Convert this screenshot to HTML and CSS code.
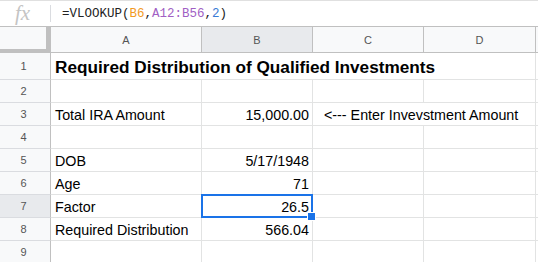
FILE: index.html
```html
<!DOCTYPE html>
<html lang="en">

<head>
    <meta charset="UTF-8">
    <meta name="viewport" content="width=device-width, initial-scale=1.0">
    <title>Required Distribution</title>
    <link rel="stylesheet" href="styles.css">
</head>

<body>
    <div class="formula-bar">
        <span class="fx">fx</span>
        <span class="fx-divider"></span>
        <span class="formula">=VLOOKUP(<span class="ref-a">B6</span>,<span class="ref-b">A12:B56</span>,<span class="ref-num">2</span>)</span>
    </div>

    <div class="sheet">
        <!-- column headers -->
        <div class="corner"></div>
        <div class="col-head">A</div>
        <div class="col-head selected">B</div>
        <div class="col-head">C</div>
        <div class="col-head">D</div>
        <div class="col-head"></div>

        <!-- row 1 -->
        <div class="row-head">1</div>
        <div class="cell title span-4">Required Distribution of Qualified Investments</div>
        <div class="cell"></div>

        <!-- row 2 -->
        <div class="row-head">2</div>
        <div class="cell"></div>
        <div class="cell"></div>
        <div class="cell"></div>
        <div class="cell"></div>
        <div class="cell"></div>

        <!-- row 3 -->
        <div class="row-head">3</div>
        <div class="cell">Total IRA Amount</div>
        <div class="cell num">15,000.00</div>
        <div class="cell note span-2">&lt;--- Enter Invevstment Amount</div>
        <div class="cell"></div>

        <!-- row 4 -->
        <div class="row-head">4</div>
        <div class="cell"></div>
        <div class="cell"></div>
        <div class="cell"></div>
        <div class="cell"></div>
        <div class="cell"></div>

        <!-- row 5 -->
        <div class="row-head">5</div>
        <div class="cell">DOB</div>
        <div class="cell num">5/17/1948</div>
        <div class="cell"></div>
        <div class="cell"></div>
        <div class="cell"></div>

        <!-- row 6 -->
        <div class="row-head">6</div>
        <div class="cell">Age</div>
        <div class="cell num">71</div>
        <div class="cell"></div>
        <div class="cell"></div>
        <div class="cell"></div>

        <!-- row 7 -->
        <div class="row-head selected">7</div>
        <div class="cell">Factor</div>
        <div class="cell num active">26.5</div>
        <div class="cell"></div>
        <div class="cell"></div>
        <div class="cell"></div>

        <!-- row 8 -->
        <div class="row-head">8</div>
        <div class="cell">Required Distribution</div>
        <div class="cell num">566.04</div>
        <div class="cell"></div>
        <div class="cell"></div>
        <div class="cell"></div>

        <!-- row 9 -->
        <div class="row-head">9</div>
        <div class="cell"></div>
        <div class="cell"></div>
        <div class="cell"></div>
        <div class="cell"></div>
        <div class="cell"></div>
    </div>
</body>

</html>
```

FILE: styles.css
```css
:root {
    --header-bg: #f8f9fa;
    --header-selected: #e8eaed;
    --header-line: #c0c0c0;
    --grid-line: #e2e3e3;
    --header-text: #555555;
    --accent: #1a73e8;
}

* {
    box-sizing: border-box;
    margin: 0;
    padding: 0;
}

html,
body {
    height: 100%;
}

body {
    display: flex;
    flex-direction: column;
    font-family: 'Liberation Sans', Arial, sans-serif;
    background-color: #ffffff;
    color: #000000;
    overflow: hidden;
}

/* Formula bar */
.formula-bar {
    display: flex;
    align-items: center;
    flex-shrink: 0;
    height: 27px;
    border-top: 1px solid #e0e0e0;
    border-bottom: 1px solid var(--header-line);
}

.fx {
    width: 50px;
    padding-left: 15px;
    font-family: 'Liberation Serif', serif;
    font-style: italic;
    font-size: 21px;
    color: #c4c4c4;
    line-height: 25px;
}

.fx-divider {
    width: 1px;
    height: 17px;
    background-color: #dadce0;
}

.formula {
    padding-left: 11px;
    font-family: 'Liberation Mono', monospace;
    font-size: 12.5px;
    color: #222222;
    white-space: nowrap;
}

.ref-a {
    color: #f29a1f;
}

.ref-b {
    color: #a15fc4;
}

.ref-num {
    color: #3a7bd5;
}

/* Grid */
.sheet {
    flex: 1;
    min-height: 0;
    overflow: hidden;
    display: grid;
    grid-template-columns: 51px 151px 111px 111px 112px 1fr;
    grid-template-rows: 26px 27px repeat(8, 23px);
}

.corner {
    background-color: var(--header-bg);
    border-right: 5px solid var(--header-line);
    border-bottom: 4px solid var(--header-line);
}

.col-head {
    display: flex;
    align-items: center;
    justify-content: center;
    background-color: var(--header-bg);
    border-right: 1px solid var(--header-line);
    border-bottom: 1px solid var(--header-line);
    font-size: 11px;
    color: var(--header-text);
}

.row-head {
    display: flex;
    align-items: center;
    justify-content: center;
    background-color: var(--header-bg);
    border-right: 1px solid var(--header-line);
    border-bottom: 1px solid #dadce0;
    font-size: 11px;
    color: var(--header-text);
    padding-right: 3px;
}

.col-head.selected,
.row-head.selected {
    background-color: var(--header-selected);
}

.cell {
    display: flex;
    align-items: flex-end;
    padding: 0 3px 2px 4px;
    border-right: 1px solid var(--grid-line);
    border-bottom: 1px solid var(--grid-line);
    font-size: 14.3px;
    line-height: 16px;
    white-space: nowrap;
}

.cell.num {
    justify-content: flex-end;
}

.cell.title {
    font-size: 17.2px;
    font-weight: 700;
    line-height: 20px;
}

.cell.note {
    padding-left: 11px;
}

.span-4 {
    grid-column: span 4;
}

.span-2 {
    grid-column: span 2;
}

/* Selected cell */
.cell.active {
    position: relative;
}

.cell.active::after {
    content: '';
    position: absolute;
    top: -1px;
    left: -1px;
    right: -1px;
    bottom: -1px;
    border: 2px solid var(--accent);
}

.cell.active::before {
    content: '';
    position: absolute;
    right: -4px;
    bottom: -4px;
    width: 7px;
    height: 7px;
    background-color: var(--accent);
    border: 1px solid #ffffff;
    z-index: 1;
}
```
